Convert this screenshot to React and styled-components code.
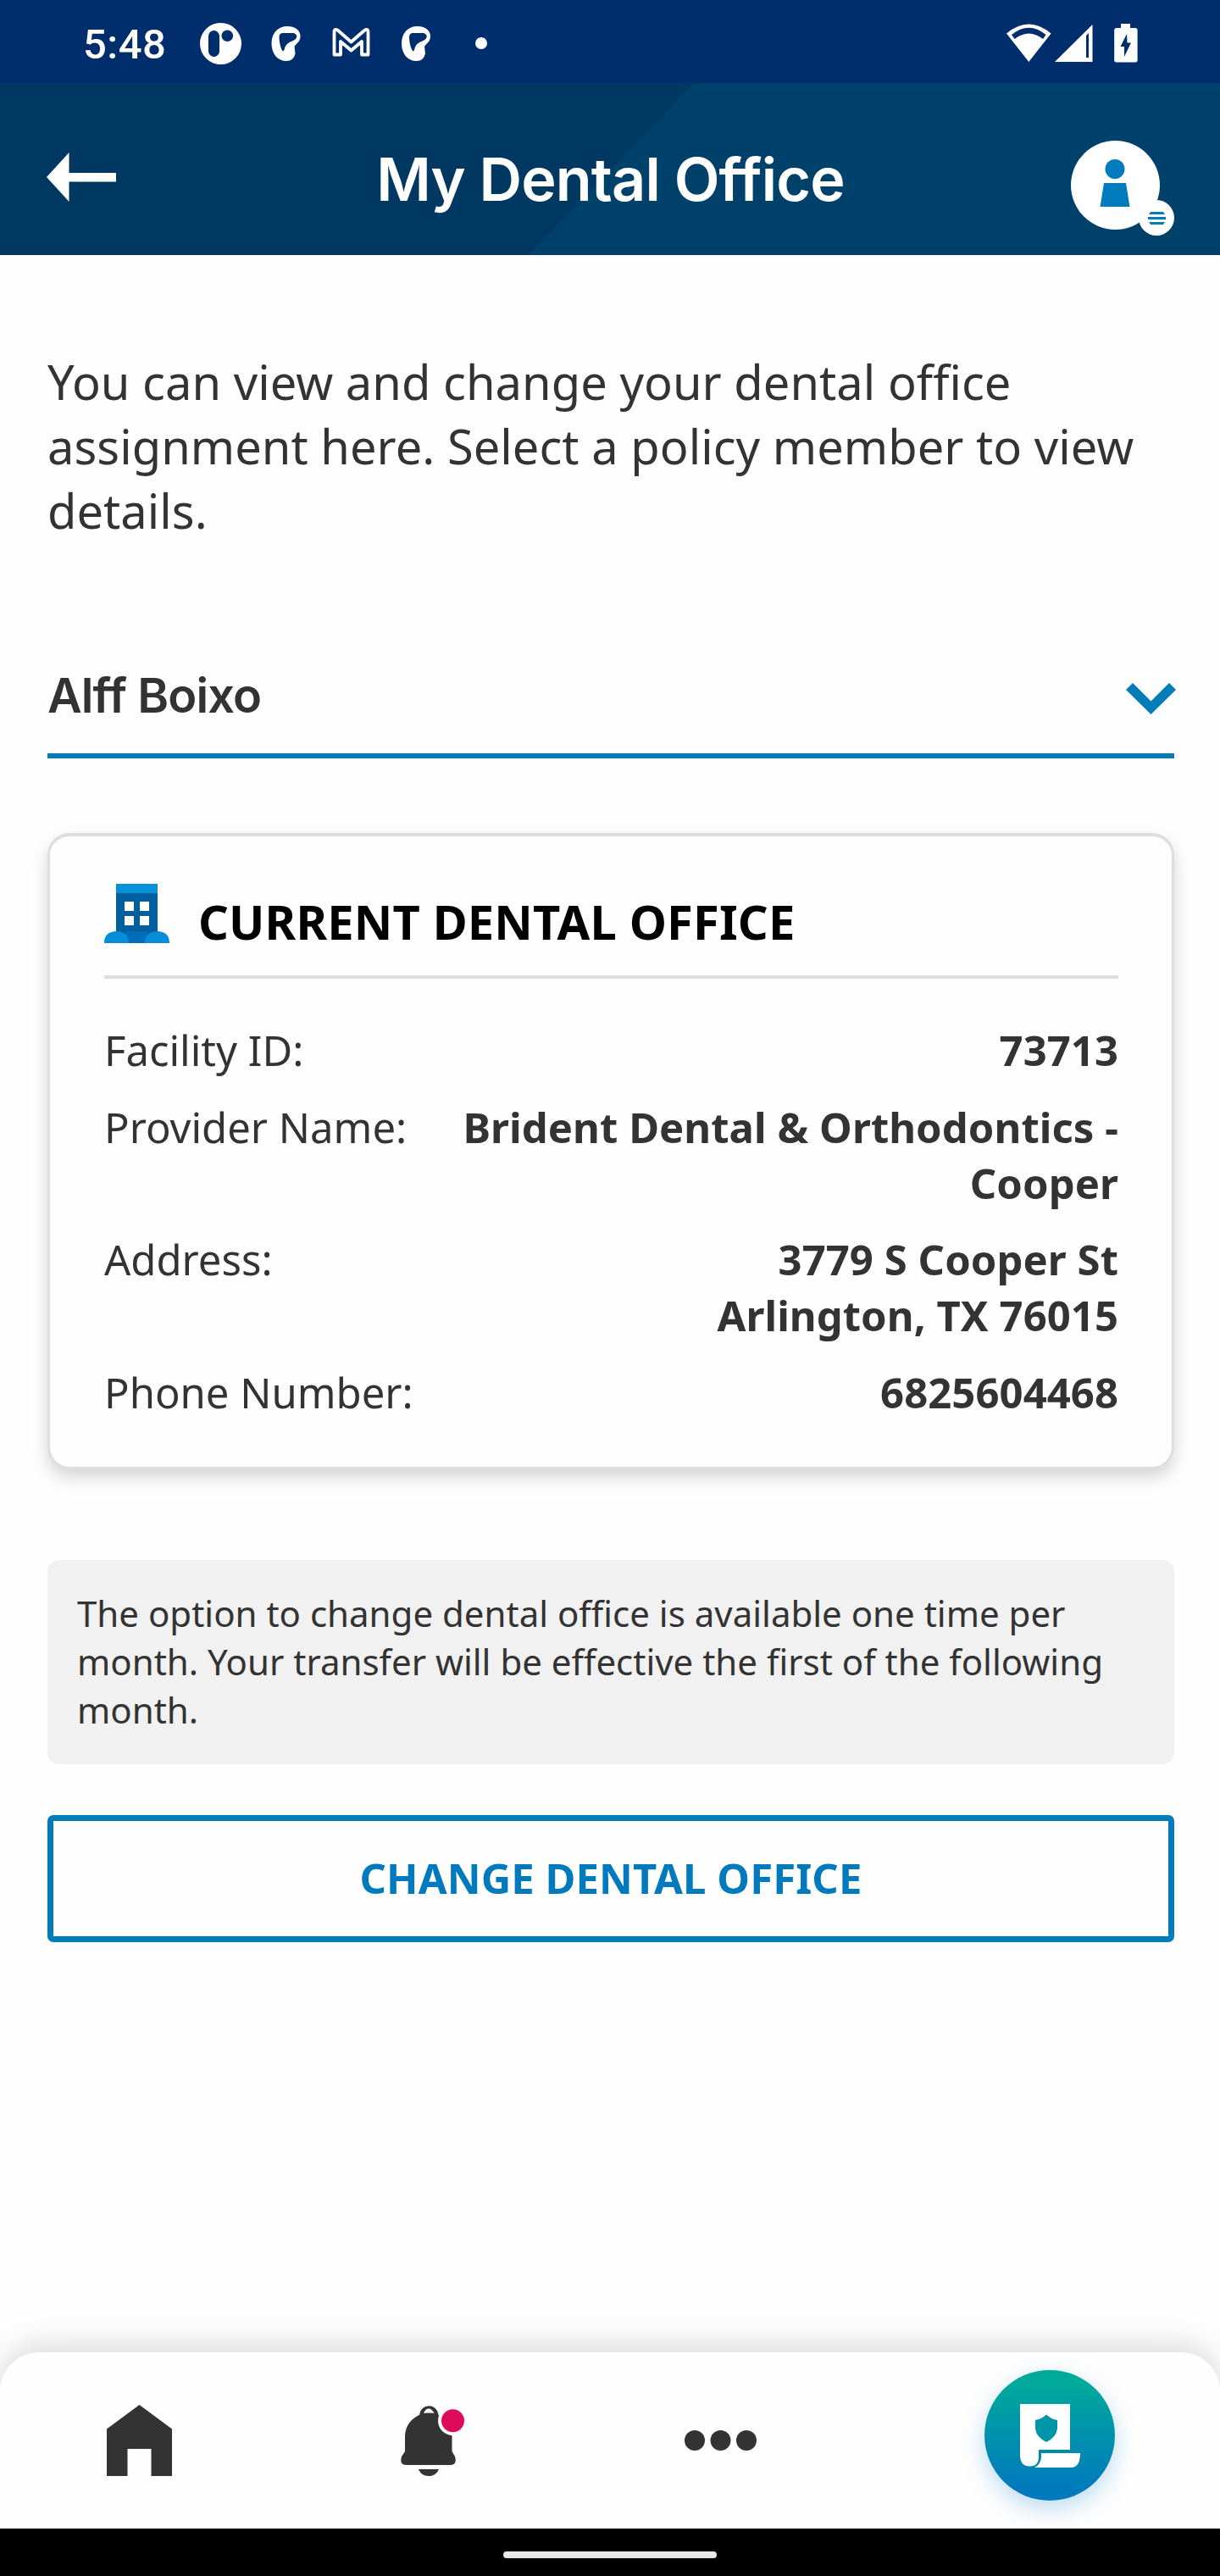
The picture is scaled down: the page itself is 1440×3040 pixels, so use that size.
import React from "react";
import styled, { createGlobalStyle } from "styled-components";

const GlobalStyle = createGlobalStyle`
  *, *::before, *::after { box-sizing: border-box; }
  body { margin: 0; background: #fefefe; }
  svg { display: block; flex: none; }
`;

const Screen = styled.div`
  width: 1440px;
  height: 3040px;
  display: flex;
  flex-direction: column;
  overflow: hidden;
  background: #fefefe;
  color: #333333;
  font-family: "Noto Sans", sans-serif;
`;

const StatusBar = styled.div`
  height: 98px;
  flex: none;
  display: flex;
  justify-content: space-between;
  align-items: center;
  padding: 6px 97px 0 98px;
  background: #002d6c;
  color: #fff;
`;

const StatusGroup = styled.div`
  display: flex;
  align-items: center;
`;

const Clock = styled.span`
  width: 138px;
  padding-top: 2px;
  font: 500 49px/58px Roboto, sans-serif;
  letter-spacing: 0.5px;
`;

const Header = styled.header`
  height: 203px;
  flex: none;
  display: grid;
  grid-template-columns: 200px 1fr 200px;
  align-items: center;
  padding: 0 54px 0 55px;
  background: linear-gradient(134deg, #003862 0 50%, #00416c 50.2%);
  color: #fff;
`;

const Title = styled.h1`
  margin: 24px 0 0;
  text-align: center;
  white-space: nowrap;
  font: 600 70px/90px Inter, sans-serif;
  letter-spacing: -0.85px;
`;

const BackButton = styled.button`
  padding: 0;
  margin-top: 19px;
  border: 0;
  background: none;
  color: #fff;
`;

const ProfileButton = styled(BackButton)`
  margin-top: 44px;
  justify-self: end;
`;

const Main = styled.main`
  flex: 1;
  display: flex;
  flex-direction: column;
  padding: 111px 54px 0 56px;
`;

const Intro = styled.p`
  margin: 0;
  font-size: 56px;
  line-height: 76px;
  letter-spacing: 0.04px;
`;

const MemberSelect = styled.div`
  margin-top: 114px;
  height: 141px;
  display: flex;
  justify-content: space-between;
  align-items: flex-start;
  border-bottom: 6px solid #007cb9;
`;

const MemberName = styled.span`
  margin-top: 29px;
  font: 600 56px/76px Inter, sans-serif;
  letter-spacing: -0.9px;
`;

const ChevronWrap = styled.span`
  margin: 52px -2px 0 0;
`;

const Card = styled.section`
  margin-top: 88px;
  height: 750px;
  padding: 56px 63px 0 64px;
  border: 4px solid #dedede;
  border-width: 4px 3px 2px;
  border-radius: 26px;
  background: #fefefe;
  box-shadow: 0 10px 20px rgba(0, 0, 0, 0.17);
`;

const CardHeader = styled.div`
  height: 112px;
  display: flex;
  align-items: flex-start;
  gap: 34px;
  border-bottom: 4px solid #dedede;
`;

const CardTitle = styled.h2`
  margin: 6px 0 0;
  color: #000;
  font-size: 56px;
  font-weight: 700;
  line-height: 76px;
  letter-spacing: 0.15px;
  white-space: nowrap;
`;

const Details = styled.dl`
  margin: 51px 0 0;
  display: flex;
  flex-direction: column;
  gap: 24.5px;
  font-size: 49px;
  line-height: 66px;
`;

const DetailRow = styled.div`
  display: flex;
  justify-content: space-between;
`;

const Label = styled.dt`
  white-space: nowrap;
`;

const Value = styled.dd`
  margin: 0;
  max-width: 790px;
  font-weight: 700;
  letter-spacing: 0.06px;
  text-align: right;
  white-space: pre-line;
`;

const Notice = styled.p`
  margin: 108px 0 0;
  padding: 34px 35px 36px;
  border-radius: 14px;
  background: #f1f1f1;
  font-size: 42px;
  line-height: 57px;
`;

const ChangeButton = styled.button`
  margin: 60px 0 0;
  height: 150px;
  padding: 0 0 3px;
  border: 7px solid #007cba;
  border-radius: 7px;
  background: #fefefe;
  color: #007abc;
  font: 700 49px/66px "Noto Sans", sans-serif;
  letter-spacing: 0.1px;
`;

const BottomNav = styled.nav`
  height: 208px;
  flex: none;
  display: flex;
  align-items: flex-start;
  padding: 21px 124px 0 126px;
  border-radius: 46px 46px 0 0;
  background: #fefefe;
  box-shadow: 0 -8px 36px rgba(0, 0, 0, 0.15);
`;

const NavItem = styled.span`
  margin: ${(p) => p.$top}px 0 0 ${(p) => p.$gap || 0}px;
`;

const Fab = styled.button`
  width: 154px;
  height: 154px;
  margin: 0 0 0 auto;
  padding: 0;
  display: grid;
  place-items: center;
  border: 0;
  border-radius: 50%;
  background: linear-gradient(180deg, #00aa9b 8%, #0079bd 92%);
  box-shadow: 0 10px 28px rgba(0, 121, 200, 0.26);
`;

const GestureBar = styled.div`
  height: 56px;
  flex: none;
  display: flex;
  justify-content: center;
  padding-top: 27px;
  background: #000;
  position: relative;
`;

const GesturePill = styled.div`
  width: 252px;
  height: 8px;
  border-radius: 4px;
  background: #e8e8e8;
`;

const NotificationIcons = () => (
  <svg width="340" height="50" viewBox="236 27 340 50" fill="#fff">
    <circle cx="260.5" cy="51.500" r="24.500" />
    <rect x="246" y="36" width="13" height="31" rx="6.500" fill="#002d6c" />
    <circle cx="268.300" cy="42.300" r="6.800" fill="#002d6c" />
    {[0, 153.5].map((dx) => (
      <g key={dx} transform={`translate(${dx} 0)`}>
        <path d="M339 31C350 31 354.500 37 354.500 43C354.500 49 350 51 347.500 55L348.500 63C347 69 344 72 338 72C328 72 320.500 64 320.500 51C320.500 39 328 31 339 31Z" />
        <path d="M333 39H346C350 39.500 351.500 43 349 46C346 49 341 49 338 53C335.500 56 336 60 334 60.500C331.500 58 329.500 50 329.500 43Q330 39.500 333 39Z" fill="#002d6c" />
      </g>
    ))}
    <path d="M394.500 64.500V38Q394.500 33 399 36L414.500 49.500L430 36Q434.500 33 434.500 38V64.500H427V49L414.500 59.500L402 49V64.500Z" fill="none" stroke="#fff" strokeWidth="3.800" strokeLinejoin="round" />
    <circle cx="568" cy="51" r="7" />
  </svg>
);

const SystemIcons = () => (
  <svg width="155" height="48" viewBox="1188 28 155 48" fill="#fff">
    <path d="M1188 39.500Q1214.300 17.500 1240.600 39.500L1214.300 73Z" />
    <path d="M1194 41Q1214.300 24.500 1234.600 41L1231 46Q1214.300 33 1197.600 46Z" fill="#002d6c" />
    <path d="M1289.500 29V73H1245Z" />
    <path d="M1282 42L1285 39V68H1282Z" fill="#002d6c" />
    <path d="M1323 28H1334V33H1340Q1342.600 33 1342.600 36V71Q1342.600 73.500 1340 73.500H1318Q1315.200 73.500 1315.200 71V36Q1315.200 33 1318 33H1323Z" />
    <path d="M1330 40L1322.500 55H1327V67L1335 50.500H1330.500Z" fill="#002d6c" />
  </svg>
);

const BackArrow = () => (
  <svg width="82" height="58" viewBox="0 0 82 58" fill="#fff">
    <path d="M0 29L26.500 0V24H82V34.500H26.500V58Z" />
  </svg>
);

const ProfileIcon = () => (
  <svg width="122" height="112" viewBox="1264 166 122 112">
    <circle cx="1316.500" cy="218.500" r="52.500" fill="#fff" />
    <circle cx="1316" cy="199.500" r="11.500" fill="#007bbd" />
    <path d="M1303 216H1329L1333.500 244H1298.500Z" fill="#007bbd" />
    <circle cx="1365" cy="257" r="21" fill="#fff" />
    <path d="M1358 250H1373L1375 253H1356ZM1355 256H1376V259H1355ZM1356 262H1375L1373 265H1358Z" fill="#007bbd" />
  </svg>
);

const Chevron = () => (
  <svg width="59" height="37" viewBox="0 0 59 37">
    <path d="M0 8L8 0L29.500 21.500L51 0L59 8L29.500 37Z" fill="#007cb9" />
  </svg>
);

const BuildingIcon = () => (
  <svg width="77" height="70" viewBox="0 0 77 70">
    <path d="M14 10H63V70H14Z" fill="#00609f" />
    <path d="M14 0H63V11H14Z" fill="#0791d8" />
    <path d="M24 21h11v11H24ZM42 21h11v11H42ZM24 38h11v11H24ZM42 38h11v11H42Z" fill="#fff" />
    <path d="M22 70L26 56H51L55 70Z" fill="#006db8" />
    <path d="M0 70Q0 56 15 56Q29 57 29 70ZM48 70Q48 57 62 56Q77 56 77 70Z" fill="#078cda" />
  </svg>
);

const HomeIcon = () => (
  <svg width="77" height="84" viewBox="0 0 77 84" fill="#333">
    <path d="M38.500 0L77 28.500V84H52.500V52H24.500V84H0V28.500Z" />
  </svg>
);

const BellIcon = () => (
  <svg width="77" height="84" viewBox="0 0 77 84" fill="#333">
    <path d="M24.500 13V11A8.800 8.500 0 0 1 42 11V13" fill="none" stroke="#333" strokeWidth="4.500" />
    <path d="M24 11Q33 7 42 11C54 16 60.500 25 60.500 38V55L64 61Q67 71 58 71H7Q-2 71 1 61L5 55V38C5 25 12 16 24 11Z" />
    <path d="M28 9.500A5 5 0 0 1 38 9.500Z" fill="#fefefe" />
    <path d="M21 76H45C43 81 39 84 33 84C27 84 23 81 21 76Z" />
    <circle cx="61.500" cy="18.700" r="17.500" fill="#fefefe" />
    <circle cx="61.500" cy="18.700" r="13.500" fill="#dc0a58" />
  </svg>
);

const MoreIcon = () => (
  <svg width="85" height="24" viewBox="0 0 85 24" fill="#333">
    <circle cx="12" cy="12" r="12" />
    <circle cx="42.500" cy="12" r="12" />
    <circle cx="73" cy="12" r="12" />
  </svg>
);

const PolicyIcon = () => (
  <svg width="71" height="75" viewBox="0 0 71 75">
    <path d="M0 0H59V54H22V62Q22 73.500 11.500 73.500Q0 73.500 0 60Z" fill="#fff" />
    <path d="M25 58H71Q71 75 60 75H17Q25 71 25 62Z" fill="#fff" />
    <path d="M31 12.500Q37 18 44 19V29Q43 39 31 45Q19 39 18 29V19Q25 18 31 12.500Z" fill="#0095a7" />
  </svg>
);

const details = [
  ["Facility ID:", "73713"],
  ["Provider Name:", "Brident Dental & Orthodontics - Cooper"],
  ["Address:", "3779 S Cooper St\nArlington, TX 76015"],
  ["Phone Number:", "6825604468"],
];

export default function App() {
  return (
    <>
      <GlobalStyle />
      <Screen>
        <StatusBar>
          <StatusGroup>
            <Clock>5:48</Clock>
            <NotificationIcons />
          </StatusGroup>
          <SystemIcons />
        </StatusBar>
        <Header>
          <BackButton aria-label="Back"><BackArrow /></BackButton>
          <Title>My Dental Office</Title>
          <ProfileButton aria-label="Profile"><ProfileIcon /></ProfileButton>
        </Header>
        <Main>
          <Intro>
            You can view and change your dental office assignment here. Select a policy member to view details.
          </Intro>
          <MemberSelect>
            <MemberName>Alff Boixo</MemberName>
            <ChevronWrap><Chevron /></ChevronWrap>
          </MemberSelect>
          <Card>
            <CardHeader>
              <BuildingIcon />
              <CardTitle>CURRENT DENTAL OFFICE</CardTitle>
            </CardHeader>
            <Details>
              {details.map(([label, value]) => (
                <DetailRow key={label}>
                  <Label>{label}</Label>
                  <Value>{value}</Value>
                </DetailRow>
              ))}
            </Details>
          </Card>
          <Notice>
            The option to change dental office is available one time per month. Your transfer will be effective the first of the following month.
          </Notice>
          <ChangeButton>CHANGE DENTAL OFFICE</ChangeButton>
        </Main>
        <BottomNav>
          <NavItem $top={41}><HomeIcon /></NavItem>
          <NavItem $top={41} $gap={270}><BellIcon /></NavItem>
          <NavItem $top={71} $gap={258}><MoreIcon /></NavItem>
          <Fab aria-label="Policy"><PolicyIcon /></Fab>
        </BottomNav>
        <GestureBar><GesturePill /></GestureBar>
      </Screen>
    </>
  );
}
